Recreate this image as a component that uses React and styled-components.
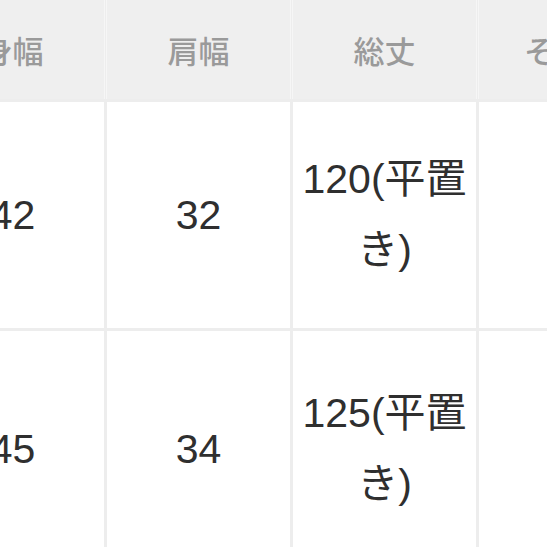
import React from "react";
import styled, { createGlobalStyle } from "styled-components";

const Global = createGlobalStyle`
  html, body {
    margin: 0;
    padding: 0;
    background: #ffffff;
    overflow: hidden;
  }
  body {
    font-family: "Liberation Sans", "Noto Sans CJK JP", sans-serif;
  }
`;

const Viewport = styled.div`
  width: 547px;
  height: 547px;
  overflow: hidden;
  background: #ffffff;
`;

const Table = styled.div`
  display: grid;
  grid-template-columns: repeat(4, 183px);
  grid-template-rows: 100px 226px 236px;
  gap: 3px;
  background: #ededed;
  margin-left: -79px;
  margin-top: -1px;
  width: max-content;
`;

const HeadCell = styled.div`
  display: flex;
  align-items: center;
  justify-content: center;
  background: #efefef;
  box-shadow: -1px 0 0 #f6f6f6, 1px 0 0 #f6f6f6;
  color: #9a9a9a;
  font-family: "Noto Sans CJK JP", sans-serif;
  font-size: 31px;
  font-weight: 500;
  padding-top: 1px;
`;

const Cell = styled.div`
  display: flex;
  align-items: center;
  justify-content: center;
  background: #ffffff;
  color: #2f2f2f;
  font-family: "Liberation Sans", "Noto Sans CJK JP", sans-serif;
  font-size: 41px;
  line-height: 71px;
  text-align: center;
  padding: 0 6px;
  line-break: strict;
`;

const headers = ["身幅", "肩幅", "総丈", "そで丈"];
const rows = [
  ["42", "32", "120(平置き)", "33"],
  ["45", "34", "125(平置き)", "35"],
];

export default function App() {
  return (
    <Viewport>
      <Global />
      <Table>
        {headers.map((h) => (
          <HeadCell key={h}>{h}</HeadCell>
        ))}
        {rows.map((r, i) =>
          r.map((v, j) => <Cell key={`${i}-${j}`}>{v}</Cell>)
        )}
      </Table>
    </Viewport>
  );
}
